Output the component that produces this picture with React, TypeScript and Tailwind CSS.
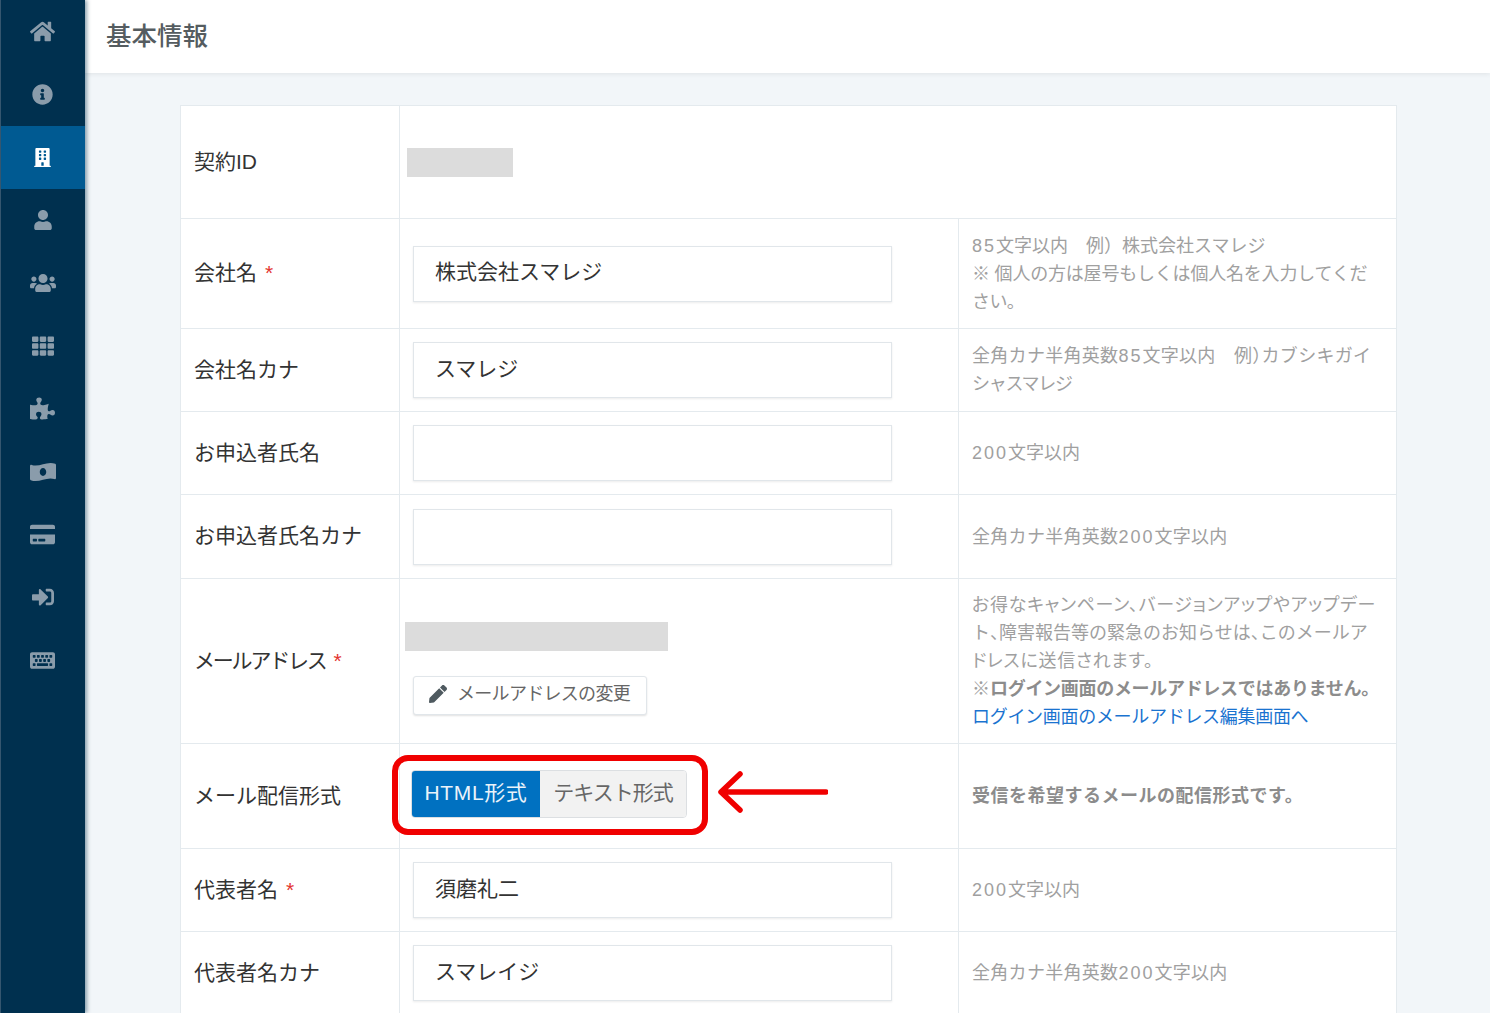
import React from 'react';
import {
  FaHome,
  FaInfoCircle,
  FaBuilding,
  FaUser,
  FaUsers,
  FaTh,
  FaPuzzlePiece,
  FaMoneyBillWaveAlt,
  FaCreditCard,
  FaSignInAlt,
  FaKeyboard,
  FaPen,
} from 'react-icons/fa';

const navItems = [
  { icon: FaHome, size: 25 },
  { icon: FaInfoCircle, size: 21 },
  { icon: FaBuilding, size: 19, active: true },
  { icon: FaUser, size: 20 },
  { icon: FaUsers, size: 26 },
  { icon: FaTh, size: 22 },
  { icon: FaPuzzlePiece, size: 25 },
  { icon: FaMoneyBillWaveAlt, size: 26 },
  { icon: FaCreditCard, size: 25 },
  { icon: FaSignInAlt, size: 22 },
  { icon: FaKeyboard, size: 25 },
];

// digits in the notes run wider than the stock font
function Num({ children }: { children: React.ReactNode }) {
  return <span className="tracking-[2px]">{children}</span>;
}

function Half({ children }: { children: React.ReactNode }) {
  return <span className="[font-feature-settings:'halt']">{children}</span>;
}

function Row({
  label,
  labelClass,
  required,
  h,
  note,
  noDivider,
  children,
}: {
  label: string;
  labelClass?: string;
  required?: boolean;
  h: string;
  note?: React.ReactNode;
  noDivider?: boolean;
  children?: React.ReactNode;
}) {
  return (
    <div className={`grid grid-cols-[219px_559px_1fr] border-b border-[#e4eaee] ${h}`}>
      <div className="flex items-center border-r border-[#e4eaee] pb-[1px] pl-[13px] text-[21px] text-[#333]">
        <span className={labelClass}>{label}</span>
        {required && <span className="ml-[8px] text-[#e3342f]">*</span>}
      </div>
      <div className={`flex flex-col justify-center ${noDivider ? '' : 'border-r border-[#e4eaee]'}`}>{children}</div>
      <div className="flex flex-col justify-center whitespace-nowrap pl-[13px] text-[18px] leading-[28px] text-[#a0a0a0]">
        {note}
      </div>
    </div>
  );
}

function TextInput({ value }: { value?: string }) {
  return (
    <div className="ml-[13px] flex h-[56px] w-[479px] items-center border border-[#e1e6ea] bg-white pb-[3px] pl-[21px] text-[21px] text-[#333] shadow-[0_1px_2px_rgba(0,0,0,0.08)]">
      {value}
    </div>
  );
}

export default function App() {
  return (
    <div
      className="flex h-[1013px] w-[1490px] overflow-hidden bg-[#f2f6f9]"
      style={{ fontFamily: '"Liberation Sans", "Noto Sans CJK JP", sans-serif' }}
    >
      {/* Sidebar */}
      <div className="z-10 w-[85px] shrink-0 border-l border-[#35566f] bg-[#00304f] shadow-[2px_0_4px_rgba(0,48,79,0.45)]">
        {navItems.map((item, i) => {
          const Icon = item.icon;
          return (
            <div
              key={i}
              className={`flex h-[62.9px] items-center justify-center pr-[1px] ${
                item.active ? 'bg-[#005a92] text-white' : 'text-[#8a9cab]'
              }`}
            >
              <Icon style={{ fontSize: item.size }} />
            </div>
          );
        })}
      </div>

      <div className="min-w-0 flex-1">
        {/* Header */}
        <div className="flex h-[73px] items-center bg-white pl-[21px] text-[25.5px] font-medium text-[#555c60] shadow-[0_1px_5px_rgba(0,0,0,0.08)]">
          基本情報
        </div>

        {/* Form table */}
        <div className="relative ml-[95px] mt-[32px] w-[1217px] border border-b-0 border-[#e4eaee] bg-white">
          <Row label="契約ID" h="h-[113px]" noDivider>
            <div className="ml-[7px] h-[29px] w-[106px] bg-[#dcdcdc]" />
          </Row>
          <Row
            label="会社名"
            required
            h="h-[110px]"
            note={
              <>
                <div>
                  <Num>85</Num>文字以内　例）株式会社スマレジ
                </div>
                <div className="tracking-[-0.2px]">※ 個人の方は屋号もしくは個人名を入力してくだ</div>
                <div className="tracking-[-0.6px]">さい。</div>
              </>
            }
          >
            <TextInput value="株式会社スマレジ" />
          </Row>
          <Row
            label="会社名カナ"
            h="h-[83px]"
            note={
              <>
                <div className="tracking-[0.3px]">
                  全角カナ半角英数<Num>85</Num>文字以内　例<Half>）</Half>カブシキガイ
                </div>
                <div className="tracking-[-1.3px]">シャスマレジ</div>
              </>
            }
          >
            <TextInput value="スマレジ" />
          </Row>
          <Row
            label="お申込者氏名"
            h="h-[83px]"
            note={
              <div>
                <Num>200</Num>文字以内
              </div>
            }
          >
            <TextInput />
          </Row>
          <Row
            label="お申込者氏名カナ"
            h="h-[84px]"
            note={
              <div className="tracking-[0.3px]">
                全角カナ半角英数<Num>200</Num>文字以内
              </div>
            }
          >
            <TextInput />
          </Row>
          <Row
            label="メールアドレス"
            labelClass="tracking-[-2.2px]"
            required
            h="h-[165px]"
            note={
              <>
                <div className="tracking-[0.7px] [font-feature-settings:'palt']">お得なキャンペーン、バージョンアップやアップデー</div>
                <div>
                  ト<Half>、</Half>障害報告等の緊急のお知らせは<Half>、</Half>このメールア
                </div>
                <div className="tracking-[0.7px] [font-feature-settings:'palt']">ドレスに送信されます。</div>
                <div>
                  ※<b className="font-bold tracking-[-0.3px] text-[#8c8c8c]">ログイン画面のメールアドレスではありません。</b>
                </div>
                <a className="tracking-[-0.3px] text-[#1a73d0]">ログイン画面のメールアドレス編集画面へ</a>
              </>
            }
          >
            <div className="ml-[5px] mt-[14px] h-[29px] w-[263px] bg-[#dcdcdc]" />
            <div className="ml-[13px] mt-[25px] flex h-[39px] w-[234px] items-center whitespace-nowrap rounded-[3px] border border-[#e1e6ea] bg-white pb-[2px] pl-[15px] text-[18px] tracking-[-0.7px] text-[#666] shadow-[0_1px_2px_rgba(0,0,0,0.12)]">
              <FaPen className="mr-[10px] text-[18px] text-[#4f5a60]" />
              メールアドレスの変更
            </div>
          </Row>
          <Row
            label="メール配信形式"
            h="h-[105px]"
            note={<b className="font-bold tracking-[0.5px] text-[#8c8c8c]">受信を希望するメールの配信形式です。</b>}
          >
            <div className="mb-[4px] ml-[11px] flex h-[48px] w-[276px] overflow-hidden rounded-[4px] border border-[#dcdfe2] text-[21px]">
              <div className="flex w-[128px] items-center justify-center bg-[#0071c1] pb-[3px] tracking-[0.6px] text-[#eaf3fa]">HTML形式</div>
              <div className="flex flex-1 items-center justify-center bg-[#f2f2f2] pb-[3px] tracking-[-1px] text-[#666]">テキスト形式</div>
            </div>
          </Row>
          <Row
            label="代表者名"
            required
            h="h-[83px]"
            note={
              <div>
                <Num>200</Num>文字以内
              </div>
            }
          >
            <TextInput value="須磨礼二" />
          </Row>
          <Row
            label="代表者名カナ"
            h="h-[83px]"
            note={
              <div className="tracking-[0.3px]">
                全角カナ半角英数<Num>200</Num>文字以内
              </div>
            }
          >
            <TextInput value="スマレイジ" />
          </Row>

          {/* Red annotation */}
          <div className="absolute left-[211px] top-[649px] h-[80px] w-[316px] rounded-[16px] border-[6px] border-[#f00000]" />
          <svg className="absolute left-[535px] top-[663px]" width="112" height="46" viewBox="0 0 112 46" fill="none">
            <path
              d="M110 23H6M24 5L5 23L24 41"
              stroke="#f00000"
              strokeWidth="5.5"
              strokeLinecap="round"
              strokeLinejoin="round"
            />
          </svg>
        </div>
      </div>
    </div>
  );
}
